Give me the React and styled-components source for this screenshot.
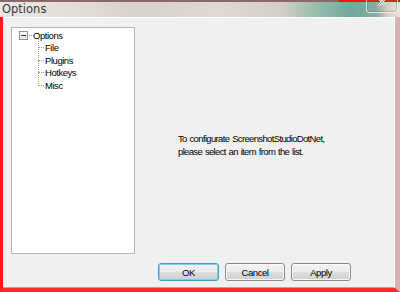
import React from 'react';
import styled, { createGlobalStyle } from 'styled-components';

const GlobalStyle = createGlobalStyle`
	html, body {
		margin: 0;
		padding: 0;
		background: #f0f0f0;
	}
	body {
		font-family: 'Liberation Sans', Arial, sans-serif;
	}
`;

const Window = styled.div`
	width: 400px;
	height: 292px;
	display: flex;
	flex-direction: column;
	overflow: hidden;
	background: #f0f0f0;
`;

const TitleBar = styled.div`
	position: relative;
	height: 17px;
	flex: none;
	box-sizing: border-box;
	border-top: 2px solid #8a6a68;
	background: linear-gradient(
		90deg,
		#ebe7e4 0%,
		#e2dcd7 20%,
		#d9d1ca 35%,
		#e0d9d2 55%,
		#d6cec6 70%,
		#9fbfae 78%,
		#6fa89e 88%,
		#86aaa2 94%,
		#d9cdc3 97%,
		#eae4de 100%
	);
	display: flex;
	align-items: center;
	padding-left: 2px;
`;

const RedStripe = styled.div`
	position: absolute;
	top: -2px;
	right: 0;
	width: 62px;
	height: 2px;
	background: #ff1010;
`;

const Title = styled.span`
	font-family: 'DejaVu Sans', 'Liberation Sans', sans-serif;
	font-size: 11.5px;
	color: #3a3a3a;
	margin-top: -1px;
`;

const CloseButton = styled.div`
	position: absolute;
	top: -2px;
	right: 2px;
	width: 32px;
	height: 13px;
	box-sizing: border-box;
	border: 1px solid rgba(255, 255, 255, 0.7);
	border-top: none;
	border-radius: 0 0 4px 4px;
	box-shadow: inset 0 0 0 1px rgba(90, 110, 110, 0.35);
	display: flex;
	justify-content: center;
	align-items: flex-start;
	overflow: hidden;
`;

const Frame = styled.div`
	flex: 1;
	display: flex;
	min-height: 0;
	border-left: 3px solid #ff1a1a;
	border-right: 5px solid #d8b2b0;
	border-bottom: 4px solid #ff2a2a;
	box-shadow: inset -1px 0 0 #aebccc;
`;

const Client = styled.div`
	flex: 1;
	display: flex;
	flex-direction: column;
	box-sizing: border-box;
	border-top: 1px solid #ffffff;
	border-bottom: 1px solid #a8a8a8;
	border-right: 1px solid #ffffff;
	padding: 9px 0 0 8px;
	background: #f0f0f0;
`;

const Body = styled.div`
	display: flex;
	height: 227px;
`;

const TreePanel = styled.div`
	width: 124px;
	box-sizing: border-box;
	border: 1px solid #b4b4b4;
	background: #ffffff;
	padding: 1px 0 0 7px;
	font-size: 9.5px;
	letter-spacing: -0.45px;
	color: #000;
`;

const RootRow = styled.div`
	height: 12.5px;
	display: flex;
	align-items: center;
`;

const Expander = styled.span`
	width: 9px;
	height: 9px;
	box-sizing: border-box;
	border: 1px solid #919191;
	background: linear-gradient(#fdfdfd, #e4e4e4);
	display: flex;
	align-items: center;
	justify-content: center;
	flex: none;

	&::after {
		content: '';
		width: 5px;
		height: 1px;
		background: #303030;
	}
`;

const Stub = styled.span`
	width: ${p => p.$w}px;
	flex: none;
	border-top: 1px dotted #a0a0a0;
	margin: 0 1px 0 ${p => p.$ml || 0}px;
`;

const Children = styled.div`
	margin-left: 19px;
	position: relative;
`;

const Branch = styled.div`
	position: absolute;
	left: 0;
	top: -3px;
	height: calc(100% - 3px);
	border-left: 1px dotted #a0a0a0;
`;

const ChildRow = styled.div`
	height: 12.5px;
	display: flex;
	align-items: center;
`;

const Message = styled.div`
	flex: 1;
	padding: 106px 0 0 43px;
	font-size: 9.5px;
	letter-spacing: -0.65px;
	word-spacing: 0.8px;
	line-height: 12.5px;
	color: #000;
`;

const Footer = styled.div`
	display: flex;
	justify-content: flex-end;
	gap: 6px;
	margin-top: 9px;
	padding-right: 43px;
`;

const Button = styled.button`
	width: ${p => p.$w || 60}px;
	height: 18px;
	padding: 0;
	box-sizing: border-box;
	border: 1px solid ${p => (p.$default ? '#3c9fd0' : '#8a8a8a')};
	border-radius: 3px;
	background: linear-gradient(#f3f3f3 0%, #ebebeb 48%, #dddddd 52%, #cfcfcf 100%);
	box-shadow: inset 0 0 0 1px ${p => (p.$default ? '#7fd0f0' : '#fbfbfb')};
	font-family: 'Liberation Sans', Arial, sans-serif;
	font-size: 9.5px;
	letter-spacing: -0.45px;
	color: #000;
`;

const children = ['File', 'Plugins', 'Hotkeys', 'Misc'];

export default function App() {
	return (
		<Window>
			<GlobalStyle />
			<TitleBar>
				<RedStripe />
				<Title>Options</Title>
				<CloseButton>
					<svg width="10" height="6" viewBox="0 0 10 6">
						<path d="M1 -2 L5 2 L9 -2 M1 6 L5 2 L9 6" stroke="#f6f6f6" strokeWidth="2" fill="none" />
						<path d="M1 -2 L5 2 L9 -2 M1 6 L5 2 L9 6" stroke="#6a7a7a" strokeWidth="0.6" fill="none" />
					</svg>
				</CloseButton>
			</TitleBar>
			<Frame>
				<Client>
					<Body>
						<TreePanel>
							<RootRow>
								<Expander />
								<Stub $w={3} $ml={1} />
								<span>Options</span>
							</RootRow>
							<Children>
								<Branch />
								{children.map(name => (
									<ChildRow key={name}>
										<Stub $w={6} />
										<span>{name}</span>
									</ChildRow>
								))}
							</Children>
						</TreePanel>
						<Message>
							To configurate ScreenshotStudioDotNet,
							<br />
							please select an item from the list.
						</Message>
					</Body>
					<Footer>
						<Button $default $w={61}>OK</Button>
						<Button>Cancel</Button>
						<Button>Apply</Button>
					</Footer>
				</Client>
			</Frame>
		</Window>
	);
}
